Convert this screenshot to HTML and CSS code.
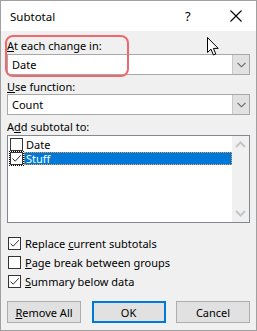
FILE: index.html
```html
<!DOCTYPE html>
<html>
<head>
<meta charset="utf-8">
<link rel="stylesheet" href="styles.css">
</head>
<body>
<div class="window">
  <div class="titlebar">
    <span class="title">Subtotal</span>
    <span class="help">?</span>
    <span class="close"><svg width="12" height="12" viewBox="0 0 12 12"><path d="M0.5 0.5 L11.5 11.5 M11.5 0.5 L0.5 11.5" stroke="#000" stroke-width="1.1" fill="none"/></svg></span>
  </div>
  <div class="content">
    <div class="label l1"><u>A</u>t each change in:</div>
    <div class="combo">
      <span class="combo-text">Date</span>
      <span class="combo-btn"><svg width="9" height="6" viewBox="0 0 9 6"><path d="M0.5 0.8 L4.5 4.8 L8.5 0.8" stroke="#606060" stroke-width="1.1" fill="none"/></svg></span>
    </div>
    <div class="label l2"><u>U</u>se function:</div>
    <div class="combo">
      <span class="combo-text">Count</span>
      <span class="combo-btn"><svg width="9" height="6" viewBox="0 0 9 6"><path d="M0.5 0.8 L4.5 4.8 L8.5 0.8" stroke="#606060" stroke-width="1.1" fill="none"/></svg></span>
    </div>
    <div class="label l3">A<u>d</u>d subtotal to:</div>
    <div class="listbox">
      <div class="items">
        <div class="item"><span class="cb"></span><span class="item-text">Date</span></div>
        <div class="item"><span class="cb-focus"><span class="cb checked"><svg width="11" height="11" viewBox="0 0 11 11"><path d="M1.5 5.5 L4.2 8.2 L9.8 2.2" stroke="#333" stroke-width="1" fill="none"/></svg></span></span><span class="item-text selected">Stuff</span></div>
      </div>
      <div class="scrollbar">
        <svg width="11" height="7" viewBox="0 0 11 7"><path d="M1 6 L5.5 1.5 L10 6" stroke="#c5c5c5" stroke-width="2" fill="none"/></svg>
        <svg width="11" height="7" viewBox="0 0 11 7"><path d="M1 1 L5.5 5.5 L10 1" stroke="#c5c5c5" stroke-width="2" fill="none"/></svg>
      </div>
    </div>
    <div class="checks">
      <div class="check"><span class="cb checked"><svg width="11" height="11" viewBox="0 0 11 11"><path d="M1.5 5.5 L4.2 8.2 L9.8 2.2" stroke="#333" stroke-width="1" fill="none"/></svg></span><span>Replace <u>c</u>urrent subtotals</span></div>
      <div class="check"><span class="cb"></span><span><u>P</u>age break between groups</span></div>
      <div class="check"><span class="cb checked"><svg width="11" height="11" viewBox="0 0 11 11"><path d="M1.5 5.5 L4.2 8.2 L9.8 2.2" stroke="#333" stroke-width="1" fill="none"/></svg></span><span><u>S</u>ummary below data</span></div>
    </div>
    <div class="buttons">
      <div class="btn"><u>R</u>emove All</div>
      <div class="btn default">OK</div>
      <div class="btn">Cancel</div>
    </div>
  </div>
  <div class="annot"></div>
  <svg class="cursor" width="13" height="20" viewBox="0 0 13 20"><path d="M0.5 0.5 L0.5 15.5 L4 12.2 L6.4 18 L8.8 17 L6.4 11.4 L11.2 11.4 Z" fill="#fff" stroke="#000" stroke-width="1" stroke-linejoin="miter"/></svg>
</div>
</body>
</html>
```

FILE: styles.css
```css
html, body {
  margin: 0;
  padding: 0;
}
body {
  font-family: "Noto Sans", "Open Sans", sans-serif;
  font-size: 11px;
  color: #000;
}
.window {
  position: relative;
  width: 257px;
  height: 331px;
  box-sizing: border-box;
  border: 1px solid #a0a0a0;
  background: #f0f0f0;
  overflow: hidden;
}
.titlebar {
  height: 30px;
  background: #fff;
  display: flex;
  align-items: center;
}
.title {
  margin-left: 9px;
  flex: 1;
  font-size: 11.5px;
}
.help {
  width: 10px;
  margin-right: 35px;
  font-size: 13px;
}
.close {
  display: flex;
  margin-right: 14px;
}
.content {
  padding: 0 6px;
}
.label {
  height: 15px;
  line-height: 15px;
}
.l1 { margin-top: 7px; margin-bottom: 1px; }
.l2 { margin-top: 4px; margin-bottom: 0px; }
.l3 { margin-top: 4px; margin-bottom: 1px; }
.combo {
  height: 21px;
  box-sizing: border-box;
  border: 1px solid #a8a8a8;
  background: #fff;
  display: flex;
}
.combo-text {
  flex: 1;
  padding-left: 4px;
  line-height: 19px;
}
.combo-btn {
  width: 16px;
  background: #e1e1e1;
  border-left: 1px solid #c8c8c8;
  display: flex;
  align-items: center;
  justify-content: center;
}
.listbox {
  height: 88px;
  box-sizing: border-box;
  border: 1px solid #828790;
  background: #fff;
  display: flex;
}
.items {
  flex: 1;
  padding-top: 1px;
  padding-left: 2px;
}
.item {
  display: flex;
  align-items: center;
  height: 14px;
}
.item-text {
  flex: 1;
  padding-left: 3px;
  line-height: 13px;
  height: 13px;
}
.item-text.selected {
  background: #0078d7;
  color: #fff;
  outline: 1px dotted #f0a040;
  outline-offset: -1px;
  margin-left: 1px;
  padding-left: 2px;
}
.cb {
  width: 13px;
  height: 13px;
  box-sizing: border-box;
  border: 1px solid #333;
  background: #fff;
  display: flex;
  align-items: center;
  justify-content: center;
  flex: none;
}
.cb-focus {
  display: flex;
  outline: 1px dotted #000;
}
.scrollbar {
  width: 17px;
  background: #f0f0f0;
  display: flex;
  flex-direction: column;
  align-items: center;
  justify-content: space-between;
  padding: 5px 0 5px;
}
.checks {
  margin-top: 13px;
  display: flex;
  flex-direction: column;
  gap: 5px;
}
.check {
  display: flex;
  align-items: center;
  gap: 4px;
  height: 14px;
  margin-left: 1px;
}
.buttons {
  margin-top: 13px;
  display: flex;
  justify-content: space-between;
}
.btn {
  width: 74px;
  height: 22px;
  box-sizing: border-box;
  border: 1px solid #adadad;
  background: #e1e1e1;
  display: flex;
  align-items: center;
  justify-content: center;
}
.btn.default {
  border: 2px solid #0078d7;
}
.annot {
  position: absolute;
  left: 4px;
  top: 34px;
  width: 124px;
  height: 42px;
  box-sizing: border-box;
  border: 2px solid #f0686c;
  border-radius: 8px;
}
.cursor {
  position: absolute;
  left: 206px;
  top: 36px;
}
```
